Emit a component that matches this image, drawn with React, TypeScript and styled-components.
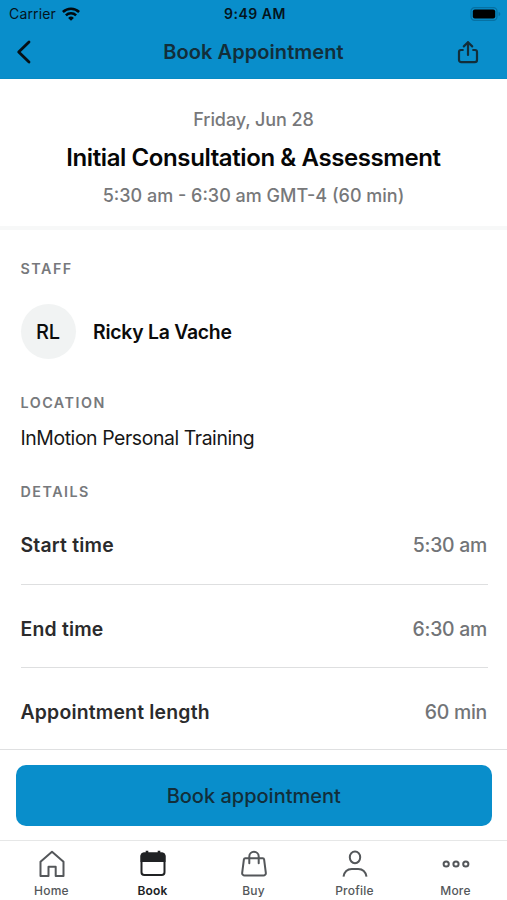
import React from 'react';
import styled, { createGlobalStyle } from 'styled-components';

const GlobalStyle = createGlobalStyle`
  *, *::before, *::after { box-sizing: border-box; }
  body { margin: 0; background: #fff; font-family: Inter, "Liberation Sans", sans-serif; }
  button { font-family: inherit; border: 0; padding: 0; background: none; cursor: pointer; }
  h1, h2, h3, p, dl, dt, dd { margin: 0; font-weight: inherit; }
  svg { display: block; flex: none; }
`;

const Screen = styled.div`
  width: 507px;
  height: 900px;
  display: flex;
  flex-direction: column;
  overflow: hidden;
  background: #fff;
`;

const TopBar = styled.header`
  height: 79px;
  flex: none;
  background: #098ecb;
  border-bottom: 1px solid #078bc4;
`;

const StatusBar = styled.div`
  height: 27px;
  display: grid;
  grid-template-columns: 1fr auto 1fr;
  align-items: center;
  padding: 0 6px 0 9px;
  color: #04141c;
`;

const Carrier = styled.span`
  display: flex;
  align-items: center;
  gap: 6px;
  font-size: 14px;
  letter-spacing: 0.15px;
`;

const Clock = styled.span`
  font-size: 14px;
  font-weight: 600;
  letter-spacing: 0.5px;
`;

const BatterySlot = styled.span`
  display: flex;
  justify-content: flex-end;
`;

const NavBar = styled.div`
  height: 51px;
  display: grid;
  grid-template-columns: 60px 1fr 60px;
  align-items: center;
  padding: 0 0 1px;
`;

const NavTitle = styled.h1`
  text-align: center;
  font-size: 20px;
  line-height: 24px;
  font-weight: 600;
  letter-spacing: 0.06px;
  color: #122e3a;
`;

const NavButton = styled.button<{ $end?: boolean }>`
  height: 40px;
  display: flex;
  align-items: center;
  justify-content: ${p => (p.$end ? 'flex-end' : 'flex-start')};
  padding: ${p => (p.$end ? '0 28px 0 0' : '0 0 0 16px')};
`;

const Summary = styled.section`
  height: 151px;
  flex: none;
  padding-top: 29px;
  display: flex;
  flex-direction: column;
  align-items: center;
  border-bottom: 4px solid #f7f8f8;
`;

const SummaryMeta = styled.p<{ $spacing: string }>`
  font-size: 18px;
  line-height: 24px;
  font-weight: 500;
  color: #77787a;
  letter-spacing: ${p => p.$spacing};
`;

const ServiceName = styled.h2`
  margin: 11px 0 11px;
  font-size: 24px;
  line-height: 30px;
  font-weight: 600;
  letter-spacing: -0.4px;
  color: #060606;
`;

const Content = styled.main`
  height: 519px;
  flex: none;
  padding: 30px 19px 0 20.5px;
`;

const SectionLabel = styled.h3`
  font-size: 14.3px;
  line-height: 18px;
  font-weight: 600;
  letter-spacing: 1.5px;
  color: #77797c;
`;

const StaffRow = styled.div`
  display: flex;
  align-items: center;
  gap: 17.5px;
  margin: 26px 0 35px;
`;

const Avatar = styled.div`
  width: 55px;
  height: 55px;
  border-radius: 50%;
  background: #f1f3f3;
  display: flex;
  align-items: center;
  justify-content: center;
  font-size: 20px;
  font-weight: 500;
  letter-spacing: -0.2px;
  color: #0b0b0b;
`;

const StaffName = styled.span`
  font-size: 19.4px;
  font-weight: 600;
  letter-spacing: -0.25px;
  color: #0b0b0b;
`;

const LocationName = styled.p`
  margin: 14px 0 33px;
  font-size: 19.4px;
  line-height: 24px;
  letter-spacing: -0.41px;
  color: #171717;
`;

const DetailRow = styled.div<{ $last?: boolean }>`
  height: ${p => (p.$last ? '81px' : '83.5px')};
  padding-top: 6px;
  display: flex;
  align-items: center;
  justify-content: space-between;
  font-size: 19.4px;
  line-height: 24px;
  border-bottom: ${p => (p.$last ? '0' : '1px solid #dedfe0')};
`;

const DetailName = styled.dt`
  font-weight: 600;
  letter-spacing: 0.2px;
  color: #2b2b2c;
`;

const DetailValue = styled.dd`
  padding-right: 1px;
  font-weight: 500;
  letter-spacing: -0.25px;
  color: #727477;
`;

const ActionBar = styled.div`
  height: 91px;
  flex: none;
  padding: 15px 15px 0 15.5px;
  border-top: 1px solid #dfe0e1;
`;

const PrimaryButton = styled.button`
  width: 476.5px;
  height: 60.5px;
  padding-top: 1px;
  border-radius: 10px;
  background: #098ecb;
  color: #122e3a;
  font-size: 20px;
  font-weight: 500;
`;

const TabBar = styled.nav`
  height: 60px;
  flex: none;
  display: grid;
  grid-template-columns: repeat(5, 101px);
  justify-content: center;
  border-top: 1px solid #e6e7e7;
`;

const Tab = styled.button<{ $active?: boolean }>`
  display: flex;
  flex-direction: column;
  align-items: center;
  padding-top: 9px;
  gap: 5px;
  color: ${p => (p.$active ? '#202224' : '#54575a')};
  font-size: 12px;
  line-height: 15px;
  font-weight: ${p => (p.$active ? 600 : 500)};
  letter-spacing: 0.22px;
`;

const TabIcon = styled.svg`
  width: 28px;
  height: 28px;
  fill: none;
  stroke: currentColor;
  stroke-width: 2;
`;

const WifiIcon = () => (
  <svg width="18" height="14" viewBox="0 0 18 14" fill="none" stroke="#020a0e" strokeWidth="2.5">
    <path d="M.9 5a11.5 11.5 0 0 1 16.200 0" />
    <path d="M3.900 8.300a7.200 7.200 0 0 1 10.200 0" />
    <path d="M6.100 10.900a4.200 4.200 0 0 1 5.800 0L9 13.800z" fill="#020a0e" stroke="none" />
  </svg>
);

const BatteryIcon = () => (
  <svg width="31" height="14" viewBox="0 0 31 14">
    <rect x="1" y="0.700" width="26" height="12.600" rx="3.600" fill="none" stroke="#0671a3" strokeWidth="1.200" />
    <rect x="2.800" y="2.600" width="22.400" height="8.800" rx="2" fill="#000" />
    <path d="M28.600 5v4c1.200-.4 1.700-1.200 1.700-2s-.5-1.600-1.700-2z" fill="#0671a3" />
  </svg>
);

const BackIcon = () => (
  <svg width="16" height="24" viewBox="0 0 16 24" fill="none" stroke="#061015" strokeWidth="2.800" strokeLinecap="round" strokeLinejoin="round">
    <path d="M13 2 2.700 12 13 22" />
  </svg>
);

const ShareIcon = () => (
  <svg width="22" height="24" viewBox="0 0 22 24" fill="none" stroke="#122e3a" strokeWidth="2.200" strokeLinecap="round" strokeLinejoin="round">
    <path d="M5.800 10H4a2 2 0 0 0-2 2v8a2.200 2.200 0 0 0 2.200 2.200h13.600A2.200 2.200 0 0 0 20 20v-8a2 2 0 0 0-2-2h-1.800" />
    <path d="M11 15V2.200M6.800 6.400 11 2.200l4.200 4.200" />
  </svg>
);

const HomeIcon = () => (
  <TabIcon viewBox="0 0 28 28">
    <path d="M2.500 26.100V11.700L14 1.700l11.500 10v14.400h-7.800v-9.300h-7.200v9.300z" strokeLinejoin="round" />
  </TabIcon>
);

const CalendarIcon = () => (
  <TabIcon viewBox="0 0 28 28">
    <rect x="2.500" y="3.400" width="23" height="21.600" rx="2.800" />
    <path d="M2.500 11V6a2.600 2.600 0 0 1 2.600-2.600h17.800A2.600 2.600 0 0 1 25.500 6v5z" fill="currentColor" />
    <path d="M8 .8v3M20 .8v3" strokeWidth="2.600" />
  </TabIcon>
);

const BagIcon = () => (
  <TabIcon viewBox="0 0 28 28" strokeLinecap="round" strokeLinejoin="round">
    <path d="M5.300 8.200h17.400a1.400 1.400 0 0 1 1.400 1.200l1.700 13.200a2.500 2.500 0 0 1-2.500 3H4.700a2.500 2.500 0 0 1-2.500-3L3.900 9.400a1.400 1.400 0 0 1 1.400-1.200z" />
    <path d="M9.300 13.200V6.500a4.700 4.700 0 0 1 9.400 0v6.700" />
  </TabIcon>
);

const ProfileIcon = () => (
  <TabIcon viewBox="0 0 28 28">
    <ellipse cx="14" cy="7.300" rx="5.200" ry="5.900" />
    <path d="M2.500 26.700c.8-4.700 4-7.700 8.300-7.700h6.400c4.300 0 7.500 3 8.300 7.700" />
  </TabIcon>
);

const MoreIcon = () => (
  <TabIcon viewBox="0 0 28 28">
    <circle cx="4.200" cy="14" r="2.600" />
    <circle cx="14" cy="14" r="2.600" />
    <circle cx="23.800" cy="14" r="2.600" />
  </TabIcon>
);

const details = [
  { name: 'Start time', value: '5:30 am' },
  { name: 'End time', value: '6:30 am' },
  { name: 'Appointment length', value: '60 min' },
];

const tabs = [
  { label: 'Home', Icon: HomeIcon },
  { label: 'Book', Icon: CalendarIcon, active: true },
  { label: 'Buy', Icon: BagIcon },
  { label: 'Profile', Icon: ProfileIcon },
  { label: 'More', Icon: MoreIcon },
];

export default function App() {
  return (
    <Screen>
      <GlobalStyle />
      <TopBar>
        <StatusBar>
          <Carrier>Carrier <WifiIcon /></Carrier>
          <Clock>9:49 AM</Clock>
          <BatterySlot><BatteryIcon /></BatterySlot>
        </StatusBar>
        <NavBar>
          <NavButton aria-label="Back"><BackIcon /></NavButton>
          <NavTitle>Book Appointment</NavTitle>
          <NavButton $end aria-label="Share"><ShareIcon /></NavButton>
        </NavBar>
      </TopBar>
      <Summary>
        <SummaryMeta $spacing="-0.1px">Friday, Jun 28</SummaryMeta>
        <ServiceName>Initial Consultation &amp; Assessment</ServiceName>
        <SummaryMeta $spacing="0px">5:30 am - 6:30 am GMT-4 (60 min)</SummaryMeta>
      </Summary>
      <Content>
        <SectionLabel>STAFF</SectionLabel>
        <StaffRow>
          <Avatar>RL</Avatar>
          <StaffName>Ricky La Vache</StaffName>
        </StaffRow>
        <SectionLabel>LOCATION</SectionLabel>
        <LocationName>InMotion Personal Training</LocationName>
        <SectionLabel>DETAILS</SectionLabel>
        <dl>
          {details.map((d, i) => (
            <DetailRow key={d.name} $last={i === details.length - 1}>
              <DetailName>{d.name}</DetailName>
              <DetailValue>{d.value}</DetailValue>
            </DetailRow>
          ))}
        </dl>
      </Content>
      <ActionBar>
        <PrimaryButton>Book appointment</PrimaryButton>
      </ActionBar>
      <TabBar>
        {tabs.map(({ label, Icon, active }) => (
          <Tab key={label} $active={active}>
            <Icon />
            {label}
          </Tab>
        ))}
      </TabBar>
    </Screen>
  );
}
